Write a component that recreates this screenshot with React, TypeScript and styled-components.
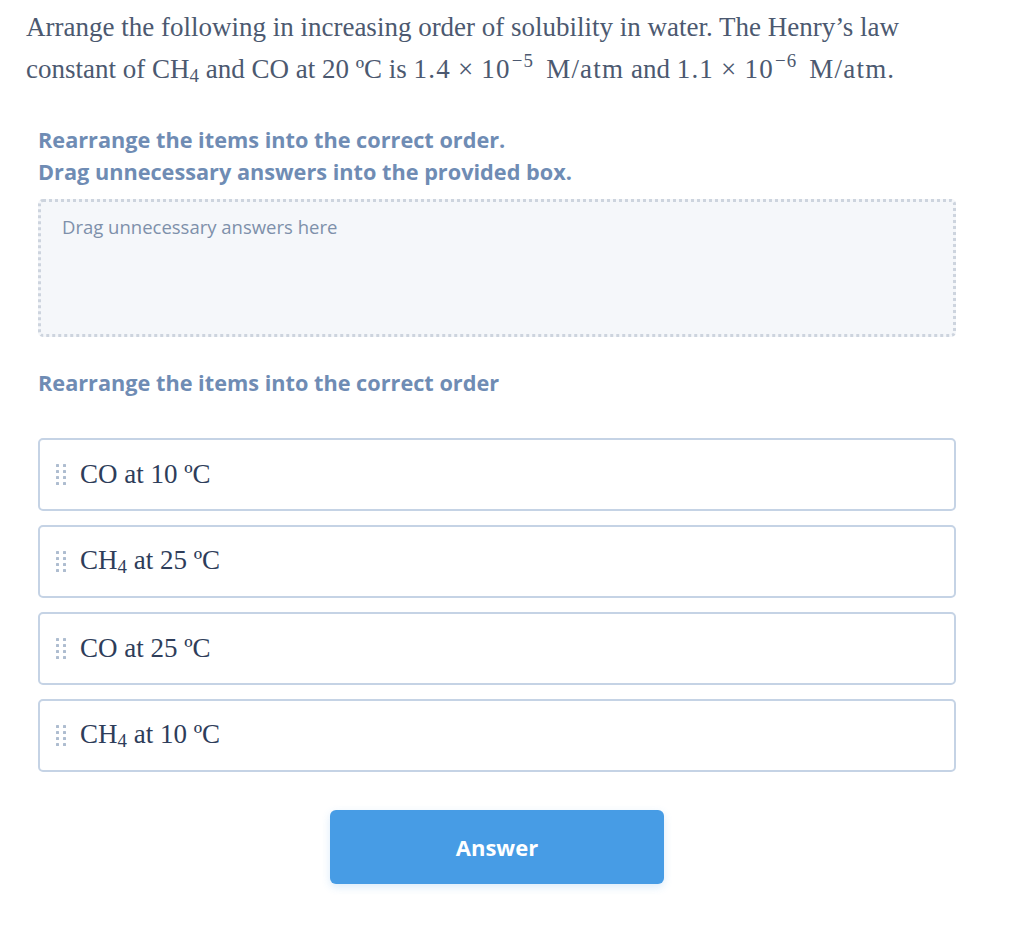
import React from "react";
import styled, { createGlobalStyle } from "styled-components";

const Global = createGlobalStyle`
  html, body { margin: 0; padding: 0; background: #ffffff; }
  body { font-family: "Open Sans", "Liberation Sans", sans-serif; }
`;

const Page = styled.div`
  width: 1024px;
  padding: 6px 0 40px 26px;
  box-sizing: border-box;
`;

const Question = styled.p`
  margin: 0;
  font-family: "Liberation Serif", "DejaVu Serif", serif;
  font-size: 27px;
  line-height: 42px;
  color: #4c5970;
  white-space: nowrap;
  sub { font-size: 0.7em; vertical-align: -0.22em; line-height: 1; }
  sup { font-size: 0.7em; vertical-align: 0.6em; line-height: 1; margin-left: 1px; margin-right: 4px; }
`;

const Math = styled.span`
  letter-spacing: 1.2px;
`;

const Times = styled.span`
  margin: 0 7px;
`;

const Body = styled.div`
  width: 918px;
  margin-left: 12px;
  display: flex;
  flex-direction: column;
`;

const Instructions = styled.div`
  margin-top: 34px;
  font-weight: 700;
  font-size: 21.7px;
  line-height: 32px;
  color: #6f8cb4;
`;

const DropZone = styled.div`
  margin-top: 11px;
  height: 138px;
  box-sizing: border-box;
  border: 3px dotted #cdd4de;
  border-radius: 5px;
  background: #f5f7fa;
  padding: 13px 21px;
  font-size: 18.5px;
  line-height: 24px;
  color: #7e90aa;
`;

const SectionTitle = styled.div`
  margin-top: 30px;
  font-weight: 700;
  font-size: 21.7px;
  line-height: 32px;
  color: #6f8cb4;
`;

const List = styled.div`
  margin-top: 39px;
  display: flex;
  flex-direction: column;
  gap: 14px;
`;

const Item = styled.div`
  height: 73px;
  box-sizing: border-box;
  border: 2.5px solid #c5d3e5;
  border-radius: 5px;
  background: #fff;
  display: flex;
  align-items: center;
  padding-left: 16px;
  gap: 14px;
`;

const Handle = styled.span`
  display: grid;
  grid-template-columns: repeat(2, 3px);
  grid-auto-rows: 3px;
  column-gap: 4px;
  row-gap: 3px;
  span { background: #aebdd0; border-radius: 0.5px; }
`;

const ItemText = styled.span`
  font-family: "Liberation Serif", "DejaVu Serif", serif;
  font-size: 27px;
  color: #2e3d5a;
  sub { font-size: 0.7em; vertical-align: -0.22em; line-height: 1; }
`;

const ButtonRow = styled.div`
  margin-top: 38px;
  display: flex;
  justify-content: center;
`;

const AnswerButton = styled.button`
  width: 334px;
  height: 74px;
  border: none;
  border-radius: 6px;
  background: #479ce5;
  color: #ffffff;
  font-family: "Open Sans", "Liberation Sans", sans-serif;
  font-weight: 700;
  font-size: 22px;
  box-shadow: 0 3px 8px rgba(71, 156, 229, 0.2);
  cursor: pointer;
`;

const DragHandle = () => (
  <Handle>
    {Array.from({ length: 8 }).map((_, i) => (
      <span key={i} />
    ))}
  </Handle>
);

const items: React.ReactNode[] = [
  <>CO at 10 ºC</>,
  <>CH<sub>4</sub> at 25 ºC</>,
  <>CO at 25 ºC</>,
  <>CH<sub>4</sub> at 10 ºC</>,
];

export default function App() {
  return (
    <>
      <Global />
      <Page>
        <Question>
          Arrange the following in increasing order of solubility in water. The Henry’s law
          <br />
          constant of CH<sub>4</sub> and CO at 20 ºC is{" "}
          <Math>
            1.4<Times>×</Times>10<sup>−5</sup> M/atm
          </Math>{" "}
          and{" "}
          <Math>
            1.1<Times>×</Times>10<sup>−6</sup> M/atm.
          </Math>
        </Question>
        <Body>
          <Instructions>
            Rearrange the items into the correct order.
            <br />
            Drag unnecessary answers into the provided box.
          </Instructions>
          <DropZone>Drag unnecessary answers here</DropZone>
          <SectionTitle>Rearrange the items into the correct order</SectionTitle>
          <List>
            {items.map((t, i) => (
              <Item key={i}>
                <DragHandle />
                <ItemText>{t}</ItemText>
              </Item>
            ))}
          </List>
          <ButtonRow>
            <AnswerButton>Answer</AnswerButton>
          </ButtonRow>
        </Body>
      </Page>
    </>
  );
}
